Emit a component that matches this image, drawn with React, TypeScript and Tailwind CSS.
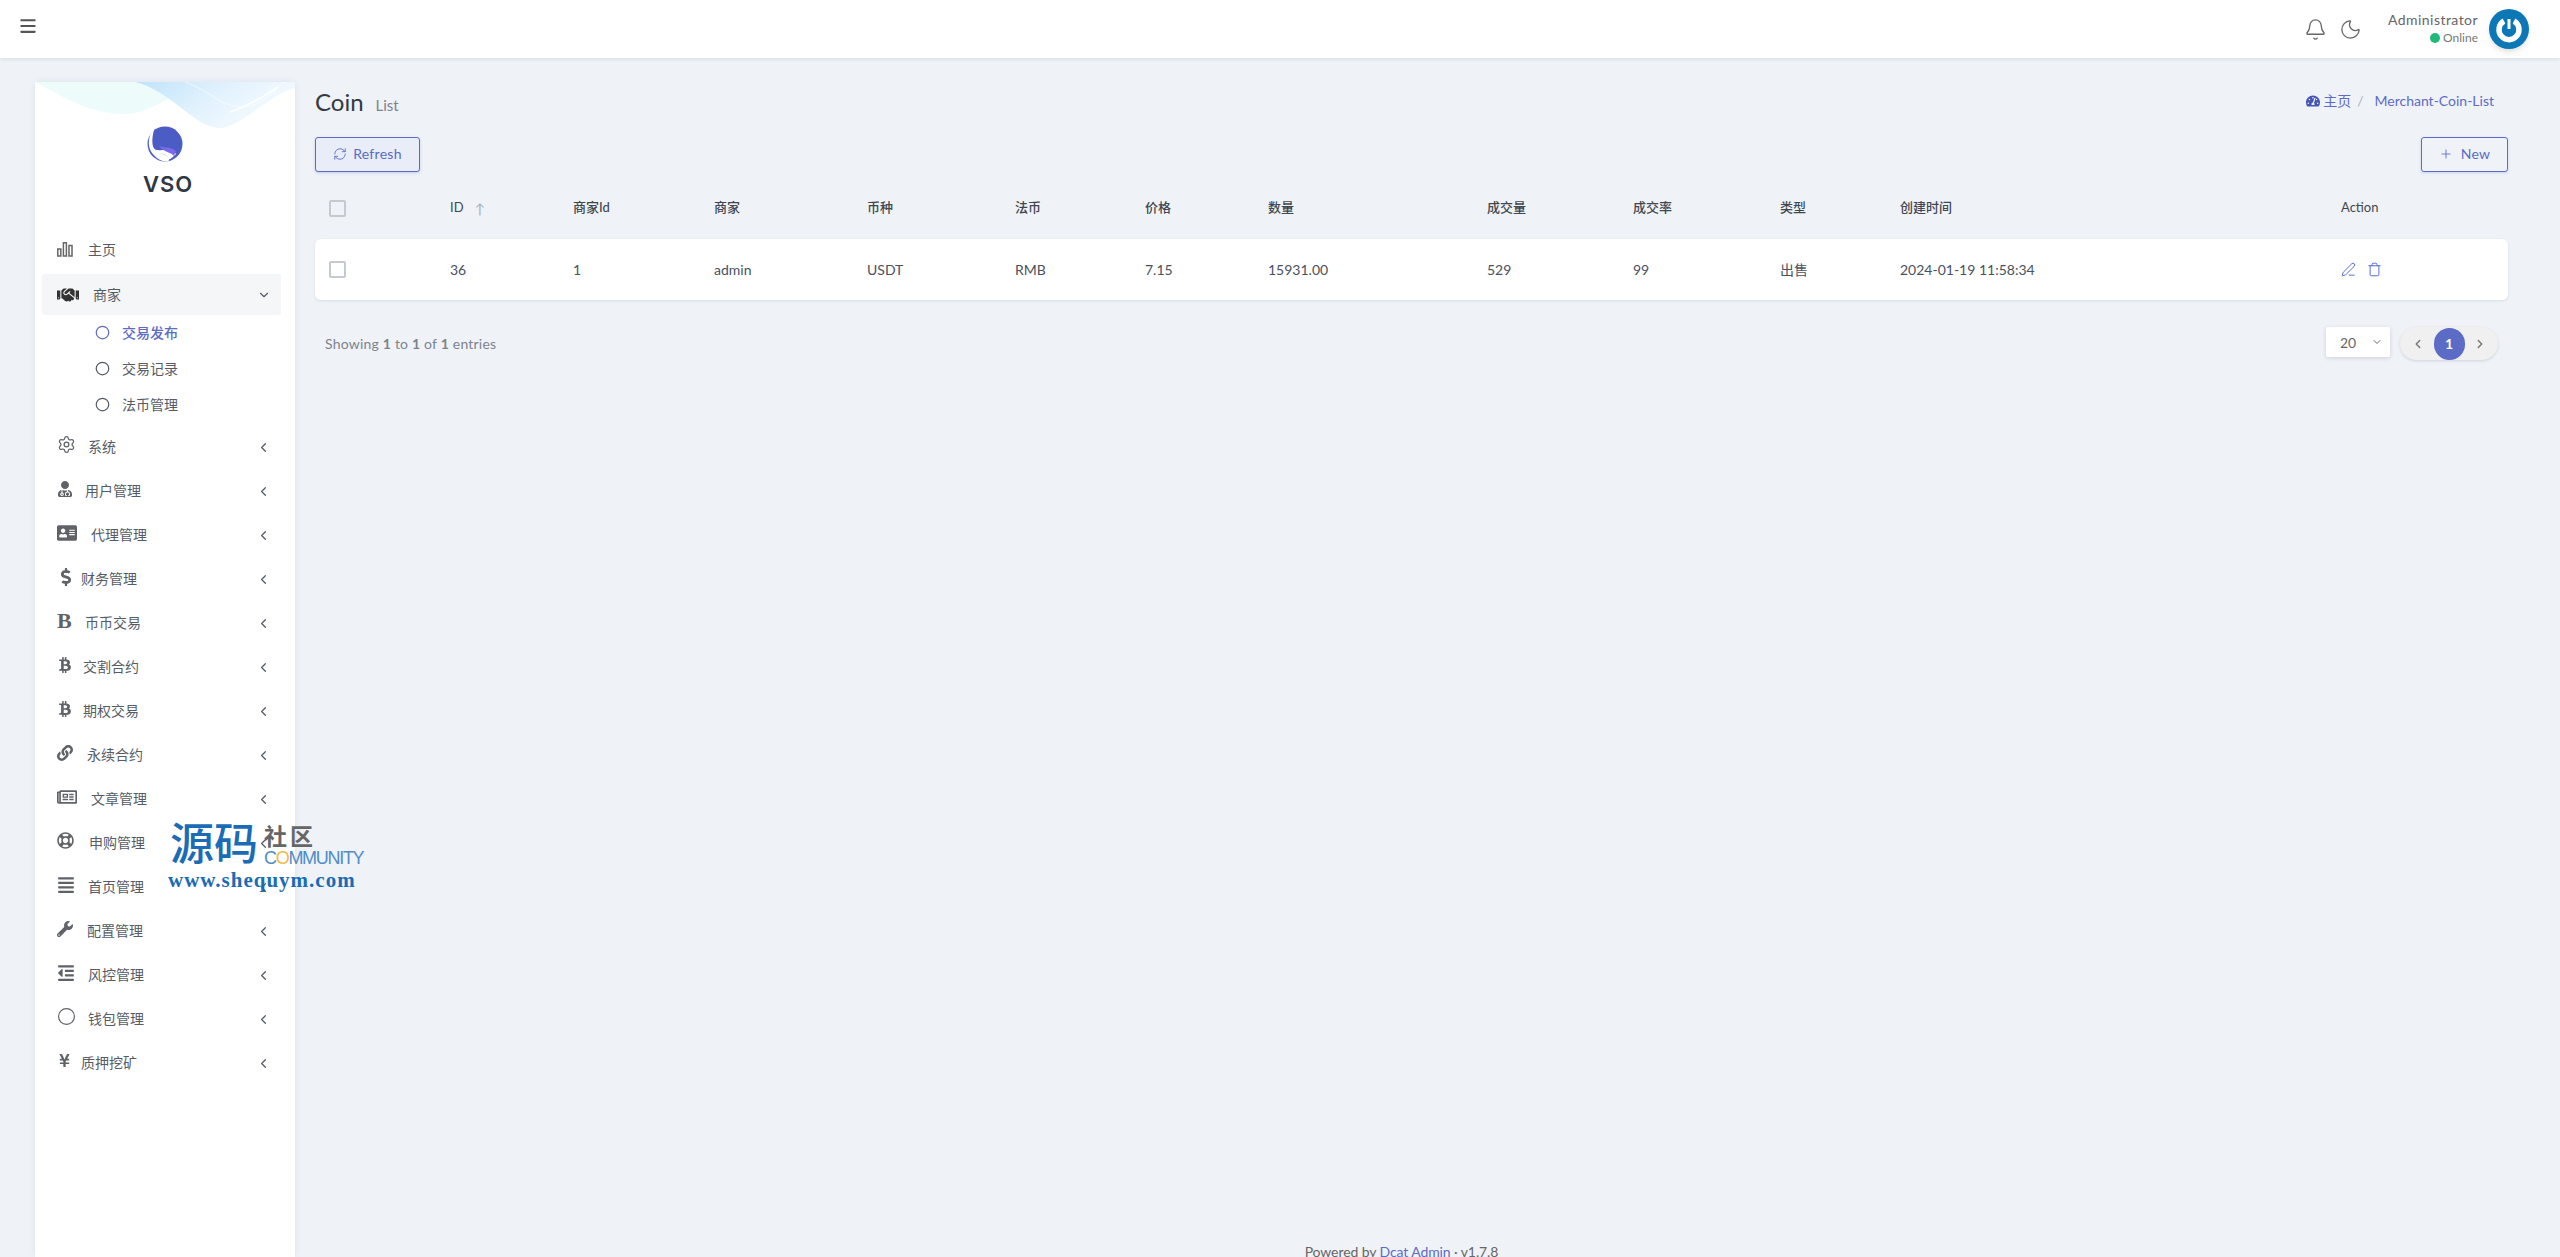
import { Bell, ChevronDown, ChevronLeft, ChevronRight, Circle, Menu, Moon, PenLine, Plus, RefreshCw, Settings, Trash } from 'lucide-react'
import {
  FaAddressCard,
  FaAlignJustify,
  FaBtc,
  FaDollarSign,
  FaHandshake,
  FaLink,
  FaOutdent,
  FaRegLifeRing,
  FaRegNewspaper,
  FaTachometerAlt,
  FaUserMd,
  FaWrench,
  FaYenSign,
} from 'react-icons/fa'

const fontStack = "font-['Lato','Noto_Sans_CJK_SC',sans-serif]"

const BarsIcon = () => (
  <svg width="16" height="15" viewBox="0 0 16 15" fill="none" stroke="currentColor" strokeWidth="1.5">
    <rect x="0.8" y="7" width="3" height="7" />
    <rect x="6.4" y="0.8" width="3" height="13.2" />
    <rect x="12" y="3.5" width="3" height="10.5" />
  </svg>
)

const SerifB = () => <span className="font-['Liberation_Serif',serif] text-[22px] font-bold leading-none">B</span>

// w-* on the icon box keeps each label where the icon's own width pushes it
const menu = [
  { label: '系统', box: 'w-[31px]', icon: <Settings size={19} strokeWidth={1.6} /> },
  { label: '用户管理', box: 'w-[28px]', icon: <FaUserMd size={16} /> },
  { label: '代理管理', box: 'w-[34px]', icon: <FaAddressCard size={20} /> },
  { label: '财务管理', box: 'w-[24px]', icon: <FaDollarSign size={18} /> },
  { label: '币币交易', box: 'w-[28px]', icon: <SerifB /> },
  { label: '交割合约', box: 'w-[26px]', icon: <FaBtc size={16} /> },
  { label: '期权交易', box: 'w-[26px]', icon: <FaBtc size={16} /> },
  { label: '永续合约', box: 'w-[30px]', icon: <FaLink size={16} /> },
  { label: '文章管理', box: 'w-[34px]', icon: <FaRegNewspaper size={20} /> },
  { label: '申购管理', box: 'w-[32px]', icon: <FaRegLifeRing size={17} /> },
  { label: '首页管理', box: 'w-[31px]', icon: <FaAlignJustify size={18} /> },
  { label: '配置管理', box: 'w-[30px]', icon: <FaWrench size={16} /> },
  { label: '风控管理', box: 'w-[31px]', icon: <FaOutdent size={18} /> },
  { label: '钱包管理', box: 'w-[31px]', icon: <Circle size={19} strokeWidth={1.5} /> },
  { label: '质押挖矿', box: 'w-[24px]', icon: <FaYenSign size={15} /> },
]

const columns = 'grid grid-cols-[121px_123px_141px_153px_148px_130px_123px_219px_146px_147px_120px_441px_1fr] items-center pl-[14px]'

const headers = ['ID', '商家Id', '商家', '币种', '法币', '价格', '数量', '成交量', '成交率', '类型', '创建时间']
const cells = ['36', '1', 'admin', 'USDT', 'RMB', '7.15', '15931.00', '529', '99', '出售', '2024-01-19 11:58:34']

const Checkbox = () => <span className="block h-[17px] w-[17px] rounded-[2px] border-2 border-[#c4c9d2]" />

const Waves = () => (
  <svg className="absolute left-0 top-0" width="260" height="46" viewBox="0 0 260 46">
    <defs>
      <linearGradient id="blue" x1="0" y1="0" x2="1" y2="0.4">
        <stop offset="0" stopColor="#bfe3fa" />
        <stop offset="0.5" stopColor="#e0f1fd" />
        <stop offset="1" stopColor="#f6fbff" />
      </linearGradient>
    </defs>
    <path d="M0 0C30 16 55 32 90 32C115 32 140 10 170 0Z" fill="#eefbfb" />
    <path d="M100 0C135 8 160 46 185 46C205 46 235 12 260 6V0Z" fill="url(#blue)" />
    <path d="M195 30C215 24 232 12 243 5" stroke="#ffffff" strokeWidth="1.5" fill="none" />
    <path d="M150 0C175 8 190 30 215 24C230 20 240 8 250 0" stroke="#ffffff" strokeWidth="0.6" fill="none" />
  </svg>
)

const Logo = () => (
  <svg width="36" height="36" viewBox="0 0 36 36">
    <circle cx="18" cy="18" r="17.5" fill="#4b5cc4" />
    <path d="M7 3.5C1 9 0 20 5 27C9 32 14 35.5 20 35.5C24 35.5 22 30 16 28C10 26 6 23 5.5 18C5 12 6 8 7 3.5Z" fill="#ffffff" />
    <path d="M5 22C8 25 14 24 19 24C24 24 28 26 29 28C26 31 24 33 21 34C22 30 17 28 12 27C9 26 6 25 5 22Z" fill="#ffffff" />
    <path d="M12 20C16 22 24 20 29 25L27 30C24 26 16 26 12 20Z" fill="#7a6ae8" />
  </svg>
)

const Avatar = () => (
  <div className="flex h-10 w-10 items-center justify-center rounded-full bg-[#0b77b7] shadow-md">
    <svg width="30" height="30" viewBox="0 0 30 30" fill="none" stroke="#ffffff">
      <path d="M10 7A10 10 0 1 0 20 7" strokeWidth="5.5" />
      <path d="M15 4V15" stroke="#0b77b7" strokeWidth="7" />
      <path d="M15 5V15" strokeWidth="3" />
    </svg>
  </div>
)

const Watermark = () => (
  <div className="absolute left-[168px] top-[820px] h-[70px] w-[200px] font-['Noto_Sans_CJK_SC',sans-serif]">
    <span className="absolute left-[2px] top-[-9px] text-[44px] font-medium leading-[60px] text-[#1b6cb6]">源码</span>
    <span className="absolute left-[96px] top-[1px] text-[23px] font-bold leading-[28px] tracking-[3px] text-[#666666]">社区</span>
    <span className="absolute left-[96px] top-[28px] font-['Liberation_Sans',sans-serif] text-[18px] leading-[20px] tracking-[-1.3px] text-[#4f8cc9]">
      C<span className="text-[#f5b942]">O</span>MMUNITY
    </span>
    <span className="absolute left-0 top-[49px] font-['Liberation_Serif',serif] text-[21px] font-bold leading-[22px] tracking-[1px] text-[#1b6cb6]">
      www.shequym.com
    </span>
  </div>
)

const Sidebar = () => (
  <aside className="relative ml-[35px] mt-[24px] w-[260px] shrink-0 bg-white text-[14px] text-[#555c66] shadow-[0_0_6px_rgba(90,110,150,0.12)]">
    <Waves />
    <div className="relative flex flex-col items-center pt-[44px]">
      <Logo />
      <div className="ml-[6px] mt-[8px] font-['Inter',sans-serif] text-[22px] font-semibold leading-[28px] tracking-[1px] text-[#2f3744]">VSO</div>
    </div>
    <nav className="mt-[30px]">
      <div className="flex h-[46px] items-start pl-[22px] pt-[11px]">
        <span className="mt-[3px] w-[31px] text-[#666]">
          <BarsIcon />
        </span>
        主页
      </div>
      <div className="ml-[7px] mr-[14px] flex h-[41px] items-center rounded-[2px] bg-[#f5f6f8] pl-[15px] pr-[10px]">
        <span className="w-[36px] text-[#333]">
          <FaHandshake size={22} />
        </span>
        <span className="flex-1">商家</span>
        <ChevronDown size={14} />
      </div>
      <div className="-mt-[1px] flex flex-col pb-[2px]">
        <div className="flex h-[36px] items-center pl-[60px] font-medium text-[#5c6bc6]">
          <Circle size={15} className="mr-[12px]" />
          交易发布
        </div>
        <div className="flex h-[36px] items-center pl-[60px]">
          <Circle size={15} className="mr-[12px]" />
          交易记录
        </div>
        <div className="flex h-[36px] items-center pl-[60px]">
          <Circle size={15} className="mr-[12px]" />
          法币管理
        </div>
      </div>
      {menu.map((item) => (
        <div key={item.label} className="flex h-[44px] items-center pl-[22px] pr-[24px]">
          <span className={`${item.box} -mt-[3px] flex items-center text-[#5f6368]`}>{item.icon}</span>
          <span className="flex-1">{item.label}</span>
          <ChevronLeft size={15} className="mt-[3px]" />
        </div>
      ))}
    </nav>
  </aside>
)

export default function App() {
  return (
    <div className={`${fontStack} relative flex h-[1257px] flex-col overflow-hidden bg-[#eff3f8]`}>
      <header className="z-10 flex h-[58px] shrink-0 items-center bg-white pl-[18px] pr-[31px] shadow-[0_1px_4px_rgba(60,70,90,0.14)]">
        <Menu size={20} strokeWidth={2.5} className="-mt-[6px] text-[#555]" />
        <div className="ml-auto flex items-center text-[#666]">
          <Bell size={23} strokeWidth={1.4} />
          <Moon size={23} strokeWidth={1.4} className="ml-[12px]" />
          <div className="ml-[26px] mr-[11px] flex flex-col items-end">
            <span className="text-[14px] leading-[18px] tracking-[0.45px]">Administrator</span>
            <span className="flex items-center text-[12px] leading-[18px] text-[#777]">
              <i className="mr-[3px] h-[10px] w-[10px] rounded-full bg-[#21b978]" />
              Online
            </span>
          </div>
          <Avatar />
        </div>
      </header>

      <div className="flex min-h-0 flex-1">
        <Sidebar />

        <main className="ml-[20px] mt-[24px] flex w-[2193px] flex-col">
          <div className="flex h-[55px] shrink-0 items-start justify-between pt-[9px]">
            <div className="-mt-[7px] flex h-[36px] items-baseline">
              <h1 className="text-[24px] font-normal text-[#333a44]">Coin</h1>
              <span className="ml-[12px] text-[15px] text-[#7c838c]">List</span>
            </div>
            <div className="-mt-[1px] flex items-center pr-[14px] text-[14px] text-[#5c6bc6]">
              <FaTachometerAlt size={14} className="mr-[3px] text-[#4655b8]" />
              主页
              <span className="ml-[6px] mr-[11px] text-[#a9b3c4]">/</span>
              Merchant-Coin-List
            </div>
          </div>

          <div className="flex shrink-0 justify-between">
            <button className="flex h-[35px] w-[105px] items-center justify-center gap-[6px] rounded-[3px] border border-[#5c6bc6] bg-[#e8edf7] pb-[2px] text-[14px] tracking-[0.3px] text-[#5c6bc6] shadow-[0_1px_3px_rgba(92,107,198,0.3)]">
              <RefreshCw size={14} strokeWidth={1.5} />
              Refresh
            </button>
            <button className="flex h-[35px] w-[87px] items-center justify-center gap-[8px] rounded-[3px] border border-[#5c6bc6] pb-[2px] text-[14px] tracking-[0.3px] text-[#5c6bc6] shadow-[0_1px_3px_rgba(92,107,198,0.25)]">
              <Plus size={14} strokeWidth={1.5} />
              New
            </button>
          </div>

          <div className={`${columns} mt-[5px] h-[62px] shrink-0 text-[13px] font-medium text-[#414750]`}>
            <Checkbox />
            {headers.map((title, i) => (
              <span key={title} className={i === 0 ? 'flex items-center gap-[11px] font-normal' : ''}>
                {title}
                {i === 0 && <span className="text-[14px] font-normal text-[#a6adb8]">↑</span>}
              </span>
            ))}
            <span className="font-normal">Action</span>
          </div>

          <div className={`${columns} h-[61px] shrink-0 rounded-[6px] bg-white text-[14px] text-[#4a5160] shadow-[0_1px_3px_rgba(60,70,90,0.12)]`}>
            <Checkbox />
            {cells.map((cell) => (
              <span key={cell}>{cell}</span>
            ))}
            <span className="flex items-center gap-[11px] text-[#4f63cf]">
              <PenLine size={15} strokeWidth={1.5} />
              <Trash size={15} strokeWidth={1.5} />
            </span>
          </div>

          <div className="mt-[27px] flex shrink-0 items-start justify-between pl-[10px] pr-[10px]">
            <p className="mt-[6px] text-[14px] tracking-[0.2px] text-[#7c838c]">
              Showing <b>1</b> to <b>1</b> of <b>1</b> entries
            </p>
            <div className="flex items-start">
              <div className="flex h-[30px] w-[64px] items-center justify-between rounded-[2px] bg-white pl-[14px] pr-[7px] text-[14px] text-[#666] shadow-[0_1px_4px_rgba(60,70,90,0.2)]">
                20
                <ChevronDown size={12} />
              </div>
              <div className="ml-[10px] flex h-[33px] w-[98px] items-center justify-between rounded-full bg-[#f0f0f0] px-[11px] text-[#777] shadow-[0_1px_3px_rgba(60,70,90,0.18)]">
                <ChevronLeft size={14} strokeWidth={2.5} />
                <span className="flex h-[32px] w-[31px] items-center justify-center rounded-full bg-[#5c6bc6] text-[14px] font-bold text-white">1</span>
                <ChevronRight size={14} strokeWidth={2.5} />
              </div>
            </div>
          </div>

          <footer className="-ml-[20px] mt-auto h-[15px] shrink-0 text-center text-[14px] leading-[20px] tracking-[-0.1px] text-[#666]">
            Powered by <a className="text-[#5c6bc6]">Dcat Admin</a> · v1.7.8
          </footer>
        </main>
      </div>

      <Watermark />
    </div>
  )
}
